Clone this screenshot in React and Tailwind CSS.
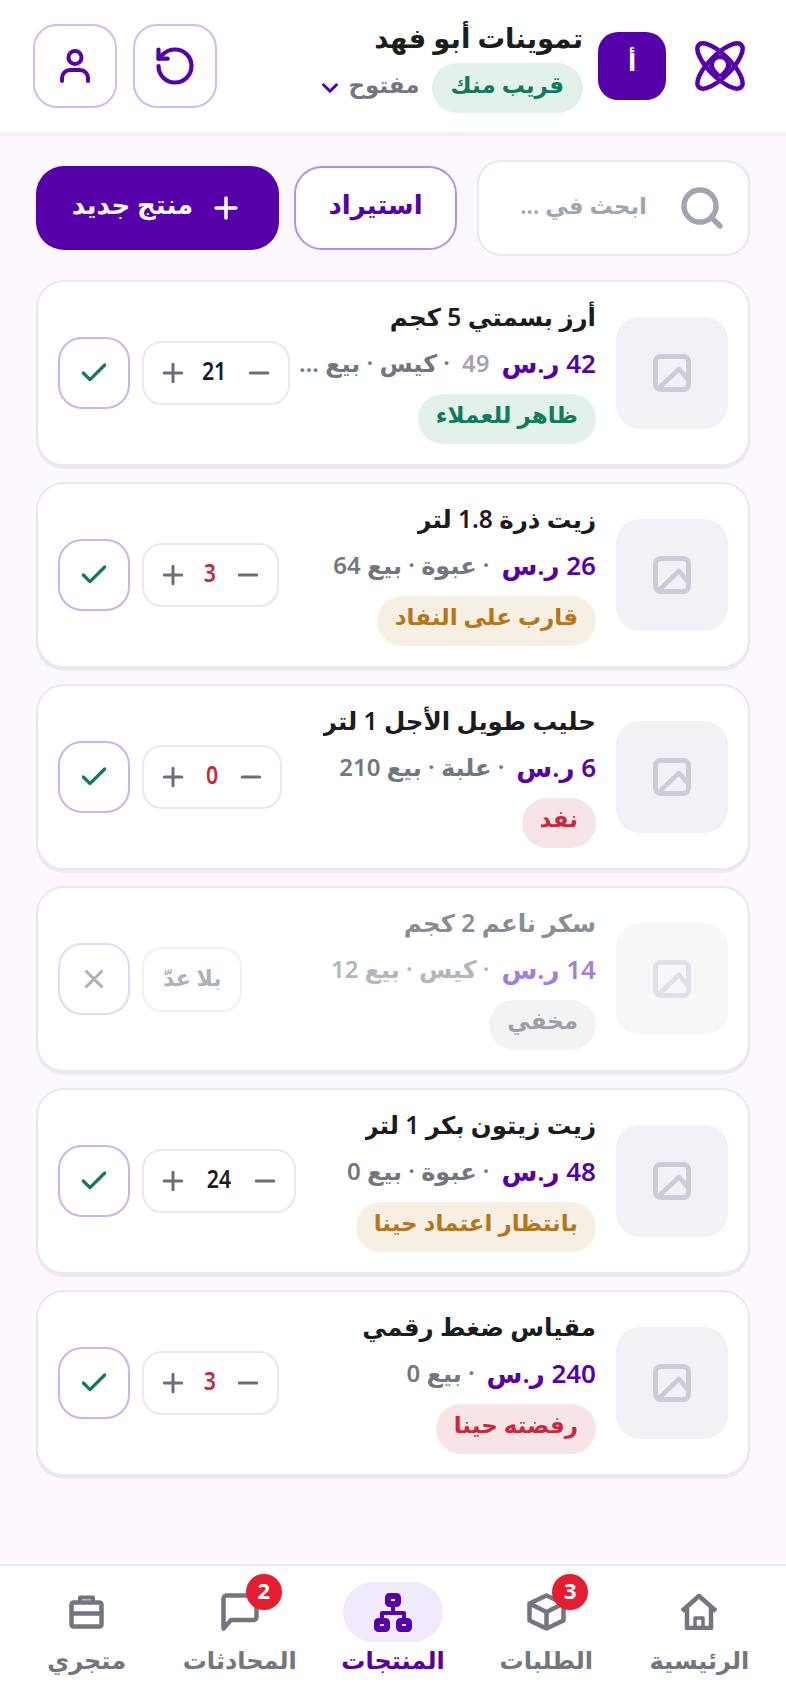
import { Check, ChevronDown, Minus, Plus, RotateCcw, Search, X } from 'lucide-react'

const products = [
  { name: 'أرز بسمتي 5 كجم', price: '42 ر.س', old: '49', meta: '· كيس · بيع …', qty: '21', qtyWidth: 'w-[24px]', badge: 'ظاهر للعملاء', tone: 'green' },
  { name: 'زيت ذرة 1.8 لتر', price: '26 ر.س', meta: '· عبوة · بيع 64', qty: '3', qtyWidth: 'w-[13px]', low: true, badge: 'قارب على النفاد', tone: 'amber' },
  { name: 'حليب طويل الأجل 1 لتر', price: '6 ر.س', meta: '· علبة · بيع 210', qty: '0', qtyWidth: 'w-[16px]', low: true, badge: 'نفد', tone: 'red' },
  { name: 'سكر ناعم 2 كجم', price: '14 ر.س', meta: '· كيس · بيع 12', badge: 'مخفي', tone: 'gray', hidden: true },
  { name: 'زيت زيتون بكر 1 لتر', price: '48 ر.س', meta: '· عبوة · بيع 0', qty: '24', qtyWidth: 'w-[30px]', badge: 'بانتظار اعتماد حينا', tone: 'amber' },
  { name: 'مقياس ضغط رقمي', price: '240 ر.س', meta: '· بيع 0', qty: '3', qtyWidth: 'w-[13px]', low: true, badge: 'رفضته حينا', tone: 'red' },
]

const tones = {
  green: 'bg-[#e4f0ea] text-[#0f7b5a]',
  amber: 'bg-[#f6efe3] text-[#b5761b]',
  red: 'bg-[#f7e4e6] text-[#c9283c]',
  gray: 'bg-[#f2f3f4] text-[#9ca0a6]',
}

function Logo() {
  return (
    <svg width="54" height="54" viewBox="0 0 54 54" fill="none" stroke="#5500a8" strokeWidth="4.5">
      <ellipse cx="27" cy="27" rx="30" ry="11" transform="rotate(45 27 27)" />
      <ellipse cx="27" cy="27" rx="30" ry="11" transform="rotate(-45 27 27)" />
      <circle cx="27" cy="27" r="11" fill="#5500a8" stroke="none" />
      <path d="M27 35c-3-3-6-6-6-9a6 6 0 0 1 12 0c0 3-3 6-6 9z" fill="#fff" stroke="none" />
    </svg>
  )
}

function ImageIcon() {
  return (
    <svg width="38" height="38" viewBox="0 0 38 38" fill="none" stroke="#cbccd8" strokeWidth="5" strokeLinejoin="round">
      <rect x="2.5" y="2.5" width="33" height="33" rx="5" />
      <path d="M5 35 L26 15 L36 27" strokeWidth="4.5" />
    </svg>
  )
}

function UserIcon() {
  return (
    <svg width="30" height="34" viewBox="0 0 30 34" fill="none" stroke="#5500a8" strokeWidth="4" strokeLinecap="round">
      <circle cx="15" cy="8.5" r="6.5" />
      <path d="M2 32v-3a8 8 0 0 1 8-8h10a8 8 0 0 1 8 8v3" />
    </svg>
  )
}

function HomeIcon() {
  return (
    <svg width="38" height="36" viewBox="0 0 38 36" fill="none" stroke="#737680" strokeWidth="4.5" strokeLinejoin="round">
      <path d="M2 17 L19 2 L36 17 M7 13 V34 H31 V13" />
      <path d="M15 34 V24 H23 V34" strokeWidth="3.5" />
    </svg>
  )
}

function BoxIcon() {
  return (
    <svg width="39" height="38" viewBox="0 0 39 38" fill="none" stroke="#737680" strokeWidth="4.5" strokeLinejoin="round">
      <path d="M19.5 2.5 L36.5 10.5 V27.5 L19.5 35.5 L2.5 27.5 V10.5 Z" />
      <path d="M2.5 10.5 L19.5 19 L36.5 10.5 M19.5 19 V35.5" />
    </svg>
  )
}

function ChatIcon() {
  return (
    <svg width="38" height="38" viewBox="0 0 38 38" fill="none" stroke="#737680" strokeWidth="4.5" strokeLinejoin="round">
      <path d="M5.5 2.5 H32.5 a3 3 0 0 1 3 3 V24 a3 3 0 0 1 -3 3 H10 L2.5 35.5 V5.5 a3 3 0 0 1 3 -3 Z" />
    </svg>
  )
}

function TreeIcon() {
  return (
    <svg width="38" height="39" viewBox="0 0 38 39" fill="none" stroke="#5500a8" strokeWidth="6" strokeLinejoin="round">
      <rect x="14" y="3" width="10" height="8" rx="1.5" />
      <rect x="3" y="28" width="10" height="8" rx="1.5" />
      <rect x="25" y="28" width="10" height="8" rx="1.5" />
      <path d="M19 12 V20 M8 27 V20 H30 V27" strokeWidth="4" />
    </svg>
  )
}

function BriefcaseIcon() {
  return (
    <svg width="35" height="34" viewBox="0 0 35 34" fill="none" stroke="#737680" strokeWidth="4.5" strokeLinejoin="round">
      <rect x="2.5" y="7.5" width="30" height="24" rx="2" />
      <path d="M2.5 18.5 H32.5" />
      <path d="M11 6 V2.5 H24 V6" strokeWidth="4" />
    </svg>
  )
}

function ProductCard({ item }) {
  return (
    <div className="flex h-[186px] items-center gap-3 rounded-[28px] border-2 border-[#e8e8ef] bg-white px-[20px] shadow-[0_3px_0_#eeeaf2]">
      <div className={`flex h-[112px] w-[112px] shrink-0 items-center justify-center rounded-[24px] ${item.hidden ? 'bg-[#f7f7f9]' : 'bg-[#f1f2f6]'}`}>
        <div className={item.hidden ? 'opacity-50' : ''}>
          <ImageIcon />
        </div>
      </div>
      <div className="mr-2 mb-[3px] flex min-w-0 flex-1 flex-col items-start">
        <div className={`truncate text-[24.5px] leading-[36px] font-semibold ${item.hidden ? 'text-[#8b8d94]' : 'text-[#1c1b20]'}`}>{item.name}</div>
        <div className="mt-[10px] flex w-full items-center gap-3 text-[24px] leading-[36px] font-semibold whitespace-nowrap">
          <span className={`shrink-0 text-[26px] ${item.hidden ? 'text-[#a47fd6]' : 'text-[#5500a8]'}`}>{item.price}</span>
          {item.old && <span className="shrink-0 text-[#a2a4b0]">{item.old}</span>}
          <span className={`min-w-0 ${item.hidden ? 'text-[#b4b5bd]' : 'text-[#737680]'}`}>{item.meta}</span>
        </div>
        <span className={`mt-[13px] h-[50px] rounded-full px-[18px] text-[23px] leading-[40px] font-semibold ${tones[item.tone]}`}>{item.badge}</span>
      </div>
      {item.hidden ? (
        <div className="flex h-[65px] shrink-0 items-center rounded-[20px] border-2 border-[#f1f1f5] px-[19px] pb-1 text-[22px] font-semibold text-[#b0b1ba]">بلا عدّ</div>
      ) : (
        <div className="flex h-[64px] shrink-0 items-center gap-4 rounded-[20px] border-2 border-[#e8e8ef] px-[14px] text-[25px] font-semibold">
          <Minus size={30} className="text-[#6b6e7a]" strokeWidth={2.4} />
          <span className={`${item.qtyWidth} scale-x-85 pb-[5px] text-center ${item.low ? 'text-[#c9283c]' : 'text-[#1c1b20]'}`}>{item.qty}</span>
          <Plus size={30} className="text-[#6b6e7a]" strokeWidth={2.4} />
        </div>
      )}
      <button className={`flex h-[72px] w-[72px] shrink-0 items-center justify-center rounded-[24px] border-2 ${item.hidden ? 'border-[#e4d8f6]' : 'border-[#cdb2f0]'}`}>
        {item.hidden ? <X size={30} className="text-[#b0b1ba]" strokeWidth={2.5} /> : <Check size={32} className="text-[#0f7b5a]" strokeWidth={2.4} />}
      </button>
    </div>
  )
}

function NavItem({ label, icon, count, active }) {
  return (
    <div className="flex flex-1 flex-col items-center">
      <div className={`relative flex h-[60px] w-[100px] items-center justify-center rounded-full ${active ? 'bg-[#f1eafb]' : ''}`}>
        {icon}
        {count && (
          <span className="absolute top-[-8px] right-[8px] flex h-[36px] w-[36px] items-center justify-center rounded-full bg-[#e51d30] pb-[3px] text-[22px] font-bold text-white">{count}</span>
        )}
      </div>
      <span className={`text-[24px] leading-[36px] font-semibold ${active ? 'text-[#5500a8]' : 'text-[#737680]'}`}>{label}</span>
    </div>
  )
}

export default function App() {
  return (
    <div dir="rtl" className="flex h-[1704px] w-[786px] flex-col overflow-hidden bg-[#fdf7ff] font-['Noto_Sans','DejaVu_Sans',sans-serif]">
      <header className="flex h-[136px] shrink-0 items-center border-b-4 border-[#f4eff7] bg-white pr-[39px] pl-[33px]">
        <Logo />
        <div className="mr-[27px] flex h-[68px] w-[68px] items-center justify-center rounded-[20px] bg-[#5500a8] pb-2 text-[24px] font-semibold text-white">أ</div>
        <div className="mr-[15px] flex flex-col items-start">
          <div className="text-[27.5px] leading-[36px] font-semibold text-[#1c1b20]">تموينات أبو فهد</div>
          <div className="mt-[7px] flex items-center">
            <span className="flex h-[50px] items-center rounded-full bg-[#e4f0ea] px-[19px] pb-[6px] text-[23px] font-semibold text-[#0f7b5a]">قريب منك</span>
            <span className="mr-[12px] pb-[6px] text-[23px] font-semibold text-[#737680]">مفتوح</span>
            <ChevronDown size={26} strokeWidth={2.8} className="mr-[5px] text-[#5500a8]" />
          </div>
        </div>
        <div className="mr-auto flex gap-4">
          <button className="flex h-[84px] w-[84px] items-center justify-center rounded-[24px] border-2 border-[#d3baf3]">
            <RotateCcw size={44} strokeWidth={2.3} className="text-[#5500a8]" />
          </button>
          <button className="flex h-[84px] w-[84px] items-center justify-center rounded-[24px] border-2 border-[#d3baf3]">
            <UserIcon />
          </button>
        </div>
      </header>

      <main className="flex flex-1 flex-col px-[36px] pt-[24px]">
        <div className="flex items-center gap-[15px]">
          <div className="ml-[5px] flex h-[96px] w-[273px] shrink-0 items-center gap-[31px] rounded-[24px] border-2 border-[#e8e8ef] bg-white pr-[22px] text-[23px] font-semibold text-[#a2a5b1]">
            <Search size={48} strokeWidth={2.7} className="shrink-0 text-[#a2a5b1]" />
            <span className="pb-[6px]">ابحث في ...</span>
          </div>
          <button className="flex h-[84px] w-[163px] shrink-0 items-center justify-center rounded-[28px] border-2 border-[#b692dc] bg-white pb-[8px] text-[26px] font-bold text-[#5500a8]">استيراد</button>
          <button className="flex h-[84px] w-[243px] shrink-0 items-center justify-center gap-[16px] rounded-[28px] bg-[#5500a8] text-[26px] font-bold text-white">
            <Plus size={34} strokeWidth={2.5} />
            <span className="pb-[8px]">منتج جديد</span>
          </button>
        </div>
        <div className="mt-[24px] flex flex-col gap-4">
          {products.map((item) => (
            <ProductCard key={item.name} item={item} />
          ))}
        </div>
      </main>

      <nav className="flex h-[140px] shrink-0 items-start border-t-2 border-[#e8e8ef] bg-white px-[10px] pt-[16px]">
        <NavItem label="الرئيسية" icon={<HomeIcon />} />
        <NavItem label="الطلبات" icon={<BoxIcon />} count="3" />
        <NavItem label="المنتجات" icon={<TreeIcon />} active />
        <NavItem label="المحادثات" icon={<ChatIcon />} count="2" />
        <NavItem label="متجري" icon={<BriefcaseIcon />} />
      </nav>
    </div>
  )
}
